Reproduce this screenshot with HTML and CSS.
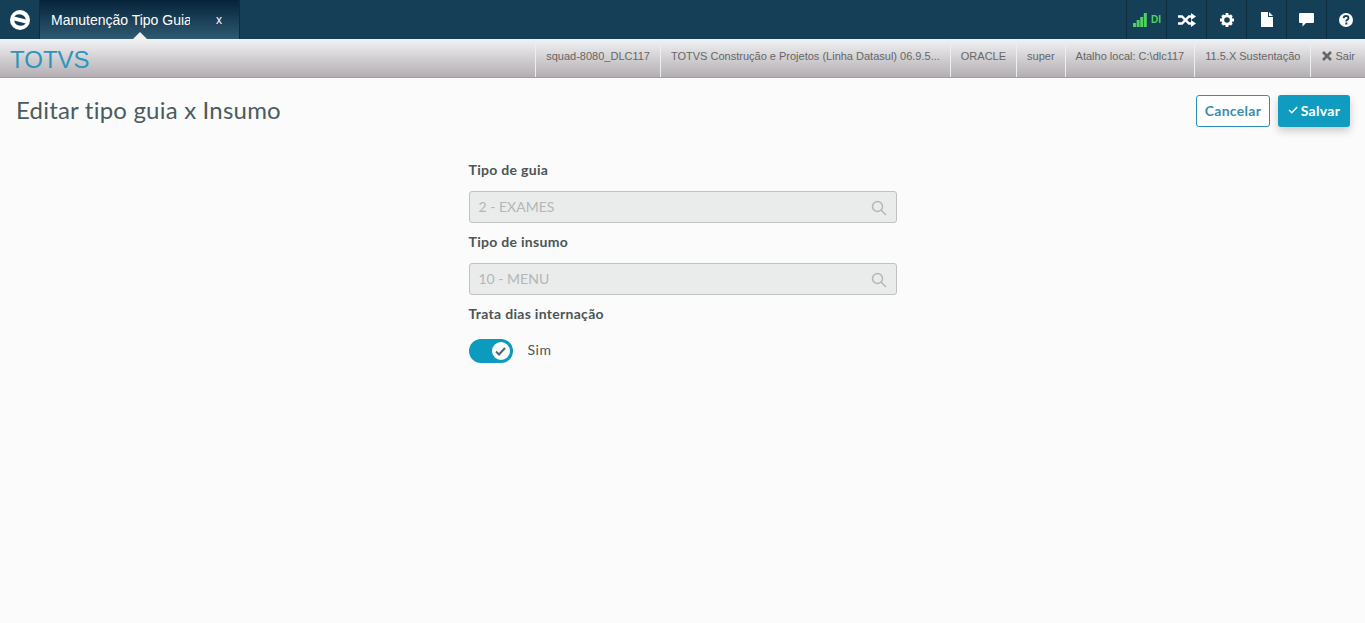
FILE: index.html
```html
<!DOCTYPE html>
<html lang="pt-BR">
<head>
    <meta charset="UTF-8">
    <meta name="viewport" content="width=device-width, initial-scale=1.0">
    <title>Manutenção Tipo Guia</title>
    <link rel="stylesheet" href="styles.css">
</head>
<body>
    <div class="topbar">
        <div class="logo">
            <svg width="22" height="22" viewBox="0 0 22 22">
                <circle cx="11" cy="11" r="10" fill="#fff"/>
                <path d="M5.2 7.6 A6.6 6.6 0 0 1 16.8 10.6 Z" fill="#143f56"/>
                <path d="M5.2 11.4 L16.8 14.4 A6.6 6.6 0 0 1 5.2 11.4 Z" fill="#143f56"/>
            </svg>
        </div>
        <div class="tab">
            <span class="tab-title">Manutenção Tipo Guia</span>
            <span class="tab-close">x</span>
            <span class="tab-arrow"></span>
        </div>
        <div class="top-actions">
            <div class="top-btn signal">
                <svg width="14" height="14" viewBox="0 0 14 14" fill="#4fd161">
                    <rect x="0" y="10" width="3" height="4"/>
                    <rect x="3.6" y="7" width="3" height="7"/>
                    <rect x="7.2" y="4" width="3" height="10"/>
                    <rect x="10.8" y="0" width="3" height="14"/>
                </svg>
                <span class="signal-text">DI</span>
            </div>
            <div class="top-btn">
                <svg width="18" height="14" viewBox="0 0 18 14" fill="none" stroke="#fff" stroke-width="2.4">
                    <path d="M0 3.5 H4 L11 10.5 H14"/>
                    <path d="M0 10.5 H4 L11 3.5 H14"/>
                    <path d="M13 0 L18 3.5 L13 7 Z M13 7 L18 10.5 L13 14 Z" fill="#fff" stroke="none"/>
                </svg>
            </div>
            <div class="top-btn">
                <svg width="14" height="14" viewBox="0 0 14 14">
                    <circle cx="7" cy="7" r="4.2" fill="none" stroke="#fff" stroke-width="2.8"/>
                    <path d="M5.6 0 H8.4 V2.5 H5.6 Z M5.6 11.5 H8.4 V14 H5.6 Z M0 5.6 H2.5 V8.4 H0 Z M11.5 5.6 H14 V8.4 H11.5 Z M1.2 3.2 L3.2 1.2 L5 3 L3 5 Z M10.8 1.2 L12.8 3.2 L11 5 L9 3 Z M1.2 10.8 L3 9 L5 11 L3.2 12.8 Z M11 9 L12.8 10.8 L10.8 12.8 L9 11 Z" fill="#fff"/>
                </svg>
            </div>
            <div class="top-btn">
                <svg width="12" height="15" viewBox="0 0 12 15" fill="#fff">
                    <path d="M0 0 H7 V5 H12 V15 H0 Z"/>
                    <path d="M8 0 L12 4 H8 Z"/>
                </svg>
            </div>
            <div class="top-btn">
                <svg width="15" height="14" viewBox="0 0 15 14" fill="#fff">
                    <path d="M1 0 H14 Q15 0 15 1 V9 Q15 10 14 10 H7 L3.5 13.5 V10 H1 Q0 10 0 9 V1 Q0 0 1 0 Z"/>
                </svg>
            </div>
            <div class="top-btn">
                <svg width="14" height="14" viewBox="0 0 14 14">
                    <circle cx="7" cy="7" r="7" fill="#fff"/>
                    <path d="M4.6 5.2 Q4.8 3 7.1 3 Q9.5 3 9.5 5 Q9.5 6.2 8.2 6.9 Q7.3 7.4 7.3 8.4" fill="none" stroke="#143f56" stroke-width="1.8"/>
                    <rect x="6.3" y="9.5" width="2" height="2" fill="#143f56"/>
                </svg>
            </div>
        </div>
    </div>

    <div class="infobar">
        <div class="brand">TOTVS</div>
        <div class="info-items">
            <div class="info-item">squad-8080_DLC117</div>
            <div class="info-item">TOTVS Construção e Projetos (Linha Datasul) 06.9.5...</div>
            <div class="info-item">ORACLE</div>
            <div class="info-item">super</div>
            <div class="info-item">Atalho local: C:\dlc117</div>
            <div class="info-item">11.5.X Sustentação</div>
            <div class="info-item exit">
                <svg width="10" height="10" viewBox="0 0 10 10" stroke="#666" stroke-width="2.6">
                    <path d="M1 1 L9 9 M9 1 L1 9"/>
                </svg>
                Sair
            </div>
        </div>
    </div>

    <div class="page-header">
        <h1>Editar tipo guia x Insumo</h1>
        <div class="page-actions">
            <button class="btn btn-outline">Cancelar</button>
            <button class="btn btn-primary">
                <svg width="10" height="8" viewBox="0 0 10 8" fill="none" stroke="#fff" stroke-width="1.4">
                    <path d="M1 4 L3.8 6.8 L9.2 1"/>
                </svg>
                Salvar
            </button>
        </div>
    </div>

    <form class="form">
        <label class="field-label">Tipo de guia</label>
        <div class="lookup">
            <span>2 - EXAMES</span>
            <svg width="16" height="16" viewBox="0 0 16 16" fill="none" stroke="#b4b8b8" stroke-width="1.5">
                <circle cx="6.5" cy="6.5" r="5"/>
                <path d="M10.2 10.2 L15 15"/>
            </svg>
        </div>
        <label class="field-label">Tipo de insumo</label>
        <div class="lookup">
            <span>10 - MENU</span>
            <svg width="16" height="16" viewBox="0 0 16 16" fill="none" stroke="#b4b8b8" stroke-width="1.5">
                <circle cx="6.5" cy="6.5" r="5"/>
                <path d="M10.2 10.2 L15 15"/>
            </svg>
        </div>
        <label class="field-label">Trata dias internação</label>
        <div class="switch-row">
            <div class="switch">
                <span class="switch-knob">
                    <svg width="11" height="9" viewBox="0 0 11 9" fill="none" stroke="#4a6a78" stroke-width="2">
                        <path d="M1 4.5 L4 7.5 L10 1"/>
                    </svg>
                </span>
            </div>
            <span class="switch-text">Sim</span>
        </div>
    </form>
</body>
</html>
```

FILE: styles.css
```css
* { box-sizing: border-box; }
html, body { height: 100%; }
body { margin: 0; background-color: #fbfbfb; font-family: "Lato", "Open Sans", sans-serif; color: #4a5c60; overflow: hidden; }

.topbar { display: flex; height: 39px; background-color: #143f56; }
.logo { width: 40px; display: flex; align-items: center; justify-content: center; border-right: 1px solid #0d2c3e; }
.tab { position: relative; width: 200px; display: flex; align-items: center; padding-left: 11px; background: linear-gradient(to bottom, #06233a, #2e5a72); border-right: 1px solid #0d2c3e; font-family: "Liberation Sans", Arial, sans-serif; font-size: 14px; color: #fff; }
.tab-title { width: 139px; white-space: nowrap; overflow: hidden; }
.tab-close { margin-left: 26px; font-size: 12px; }
.tab-arrow { position: absolute; left: 93px; bottom: 0; border-left: 7px solid transparent; border-right: 7px solid transparent; border-bottom: 7px solid #f0f0f0; }
.top-actions { margin-left: auto; display: flex; }
.top-btn { width: 40px; display: flex; align-items: center; justify-content: center; border-left: 1px solid #0d2c3e; }
.top-btn:last-child { width: 39px; }
.signal { justify-content: flex-start; padding-left: 6px; gap: 4px; }
.signal-text { font-family: "Liberation Sans", Arial, sans-serif; font-size: 10px; font-weight: bold; color: #4fd161; }

.infobar { display: flex; height: 39px; background: linear-gradient(to bottom, #f2f2f3, #b3aeb3); border-bottom: 1px solid #a09ca0; }
.brand { padding-left: 10px; font-family: "Liberation Sans", Arial, sans-serif; font-size: 24px; line-height: 41px; color: #2d95bd; }
.info-items { margin-left: auto; display: flex; }
.info-item { display: flex; align-items: center; gap: 3px; height: 100%; padding: 0 10px 4px; border-left: 1px solid #eeeeee; font-family: "Liberation Sans", Arial, sans-serif; font-size: 11px; color: #666; white-space: nowrap; }
.exit { padding-left: 11px; }

.page-header { display: flex; justify-content: space-between; align-items: center; padding: 17px 15px 0 16px; }
h1 { margin: 0 0 2px; font-size: 24px; line-height: 28px; font-weight: 400; letter-spacing: 0.2px; color: #4a5c60; }
.page-actions { display: flex; gap: 8px; }
.btn { height: 32px; padding: 0 0 2px; border-radius: 3px; font-family: "Lato", sans-serif; font-size: 14px; font-weight: 700; letter-spacing: 0.3px; }
.btn-outline { width: 74px; background-color: #fff; border: 1px solid #2a93b3; color: #3a8eac; }
.btn-primary { width: 72px; display: flex; align-items: center; justify-content: center; gap: 3px; background-color: #0f9cc0; border: none; color: #fff; box-shadow: 0 4px 8px rgba(0, 0, 0, 0.2); }

.form { width: 428px; margin: 34px auto 0; }
.field-label { display: block; height: 30px; font-size: 14px; font-weight: 700; line-height: 18px; letter-spacing: 0.3px; color: #4a5558; }
.lookup { display: flex; justify-content: space-between; align-items: center; height: 32px; margin-bottom: 10px; padding: 0 9px; background-color: #eaebeb; border: 1px solid #bfc2c2; border-radius: 3px; font-size: 14px; color: #b3b7b7; }
.lookup span { margin-bottom: 2px; }
.lookup svg { margin-top: 1px; }
.switch-row { display: flex; align-items: center; gap: 15px; margin-top: 4px; }
.switch { display: flex; justify-content: flex-end; align-items: center; width: 44px; height: 24px; padding-right: 3px; background-color: #0c9abe; border-radius: 12px; }
.switch-knob { display: flex; align-items: center; justify-content: center; width: 18px; height: 18px; background-color: #fff; border-radius: 50%; }
.switch-text { margin-bottom: 4px; font-size: 14px; letter-spacing: 0.5px; color: #4a5558; }
```
